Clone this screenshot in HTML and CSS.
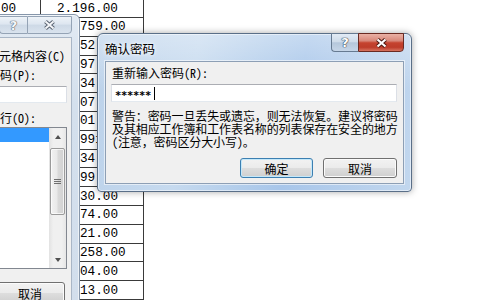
FILE: index.html
```html
<!DOCTYPE html>
<html lang="zh-CN">
<head>
<meta charset="utf-8">
<title>确认密码</title>
<link rel="stylesheet" href="styles.css">
</head>
<body>
<div class="sheet">
  <div class="row first"><div class="cell ca">00</div><div class="cell cb">2.196.00</div></div>
  <div class="row"><div class="cell ca"></div><div class="cell cb">759.00</div></div>
  <div class="row"><div class="cell ca"></div><div class="cell cb">52.00</div></div>
  <div class="row"><div class="cell ca"></div><div class="cell cb">97.00</div></div>
  <div class="row"><div class="cell ca"></div><div class="cell cb">34.00</div></div>
  <div class="row"><div class="cell ca"></div><div class="cell cb">07.00</div></div>
  <div class="row"><div class="cell ca"></div><div class="cell cb">01.00</div></div>
  <div class="row"><div class="cell ca"></div><div class="cell cb">991.00</div></div>
  <div class="row"><div class="cell ca"></div><div class="cell cb">34.00</div></div>
  <div class="row"><div class="cell ca"></div><div class="cell cb">99.00</div></div>
  <div class="row"><div class="cell ca"></div><div class="cell cb">30.00</div></div>
  <div class="row"><div class="cell ca"></div><div class="cell cb">74.00</div></div>
  <div class="row"><div class="cell ca"></div><div class="cell cb">21.00</div></div>
  <div class="row"><div class="cell ca"></div><div class="cell cb">258.00</div></div>
  <div class="row"><div class="cell ca"></div><div class="cell cb">04.00</div></div>
  <div class="row"><div class="cell ca"></div><div class="cell cb">13.00</div></div>
</div>

<div class="win back">
  <div class="titlebar">
    <div class="caps">
      <div class="cap help"><span class="q">?</span></div>
      <div class="cap close">
        <svg width="15" height="12" viewBox="0 0 15 12"><path d="M3.5 2.5 L11.5 9.5 M11.5 2.5 L3.5 9.5" stroke="#5a6472" stroke-width="4"/><path d="M3.5 2.5 L11.5 9.5 M11.5 2.5 L3.5 9.5" stroke="#f4f6f9" stroke-width="2"/></svg>
      </div>
    </div>
  </div>
  <div class="client back-client">
    <div class="chk"><span class="box"></span><span>保护工作表及锁定的单元格内容(C)</span></div>
    <div class="lbl gap6">取消工作表保护时使用的密码(P):</div>
    <div class="field back-field"></div>
    <div class="lbl gap8">允许此工作表的所有用户进行(O):</div>
    <div class="list">
      <div class="items">
        <div class="item sel">选定锁定单元格</div>
        <div class="item">选定未锁定的单元格</div>
        <div class="item">设置单元格格式</div>
        <div class="item">设置列格式</div>
        <div class="item">设置行格式</div>
        <div class="item">插入列</div>
        <div class="item">插入行</div>
        <div class="item">插入超链接</div>
        <div class="item">删除列</div>
      </div>
      <div class="sb">
        <div class="sbtn"><span class="arr up"></span></div>
        <div class="thumb"><span class="grip"></span></div>
        <div class="sbtn end"><span class="arr down"></span></div>
      </div>
    </div>
    <div class="btn back-btn">取消</div>
  </div>
</div>

<div class="win main">
  <div class="titlebar">
    <div class="title">确认密码</div>
    <div class="caps">
      <div class="cap help"><span class="q">?</span></div>
      <div class="cap close">
        <svg width="15" height="12" viewBox="0 0 15 12"><path d="M3.5 2.5 L11.5 9.5 M11.5 2.5 L3.5 9.5" stroke="#4b1810" stroke-width="4.2"/><path d="M3.5 2.5 L11.5 9.5 M11.5 2.5 L3.5 9.5" stroke="#ffffff" stroke-width="2.2"/></svg>
      </div>
    </div>
  </div>
  <div class="client main-client">
    <div class="lbl ml1">重新输入密码(R):</div>
    <div class="field main-field"><span class="stars">******</span><span class="caret"></span></div>
    <div class="warn">警告：密码一旦丢失或遗忘，则无法恢复。建议将密码<br>及其相应工作簿和工作表名称的列表保存在安全的地方<br>(注意，密码区分大小写)。</div>
    <div class="btns">
      <div class="btn ok">确定</div>
      <div class="btn cancel">取消</div>
    </div>
  </div>
</div>
</body>
</html>
```

FILE: styles.css
```css
* { box-sizing: border-box; margin: 0; padding: 0; }
html, body { width: 480px; height: 300px; overflow: hidden; background: #fff; }
body {
  position: relative;
  font-family: "Noto Sans Mono CJK SC", "Noto Sans CJK SC", sans-serif;
  font-size: 12px;
  color: #000;
}

/* spreadsheet column */
.sheet { width: 144px; font-family: "Liberation Mono", monospace; font-size: 12.7px; color: #000; }
.row { display: flex; height: 18.8px; border-bottom: 1px solid #3a3a3a; }
.row.first { height: 18px; }
.cell { display: flex; align-items: center; white-space: nowrap; overflow: hidden; }
.ca { width: 41px; border-right: 1px solid #3a3a3a; padding-left: 1px; }
.cb { width: 103px; border-right: 1px solid #3a3a3a; padding-left: 39px; }
.first .cb { padding-left: 16px; }

/* windows */
.win {
  position: absolute;
  display: flex;
  flex-direction: column;
  padding: 0 7px 7px;
  border-radius: 6px 6px 4px 4px;
}
.titlebar { display: flex; align-items: flex-start; flex: none; }
.caps { margin-left: auto; display: flex; margin-top: -1px; }
.cap { display: flex; align-items: center; justify-content: center; }
.q { font-family: "DejaVu Sans", sans-serif; font-weight: bold; font-size: 13px; line-height: 1; }
.client { flex: 1; background: #f0f0f0; display: flex; flex-direction: column; }

/* back (inactive) dialog */
.back {
  left: -159px; top: 14px; width: 239px; height: 300px;
  border: 1px solid #8696aa;
  background: linear-gradient(#e2eaf3, #d4e0ed 30%, #d2deec);
  box-shadow: inset 0 0 0 1px rgba(255,255,255,0.55);
}
.back .titlebar { height: 22px; }
.back .caps { margin-top: 1px; }
.back .cap { height: 18px; border: 1px solid #94a3b5; background: linear-gradient(#eef3f8, #dde6f0 45%, #cdd9e6 50%, #d9e3ee); }
.back .help { width: 28px; border-right: none; border-radius: 0 0 0 4px; }
.back .close { width: 45px; border-radius: 0 0 4px 0; }
.back .q { color: #f4f6f9; text-shadow: 0 0 1px #5a6472, 0 0 1px #5a6472, 0 0 1px #5a6472; }
.back-client { border: 1px solid #a9b6c6; padding: 10px 4px 0 6px; }

.chk { display: flex; align-items: center; height: 14px; white-space: nowrap; }
.box { width: 13px; height: 13px; border: 1px solid #8f8f8f; background: #fff; margin-right: 10px; flex: none; }
.lbl { height: 14px; line-height: 14px; white-space: nowrap; }
.gap6 { margin-top: 6px; }
.gap8 { margin-top: 8px; }
.field {
  background: #fff;
  border: 1px solid #abadb3;
  border-left-color: #dbdfe6; border-right-color: #dbdfe6; border-bottom-color: #e3e9ef;
}
.back-field { height: 17px; margin-top: 4px; }

.list { margin-top: 2px; height: 142px; display: flex; border: 1px solid #828790; background: #fff; }
.items { flex: 1; overflow: hidden; }
.item { height: 14px; line-height: 14px; white-space: nowrap; padding-left: 2px; }
.item.sel { background: #3399ff; color: #fff; }
.sb {
  width: 17px; display: flex; flex-direction: column;
  background: linear-gradient(to right, #e2e2e2, #f0f0f0 25%, #f0f0f0 75%, #e6e6e6);
}
.sbtn { height: 17px; display: flex; align-items: center; justify-content: center; }
.sbtn.end { margin-top: auto; }
.arr { width: 0; height: 0; border-left: 3.5px solid transparent; border-right: 3.5px solid transparent; }
.arr.up { border-bottom: 4px solid #505050; }
.arr.down { border-top: 4px solid #505050; }
.thumb {
  margin: 3px 1px 0; height: 67px;
  border: 1px solid #9a9a9a; border-radius: 2px;
  background: linear-gradient(to right, #f2f2f2, #e9e9e9 45%, #d9d9d9 55%, #d2d2d2);
  box-shadow: inset 0 0 0 1px rgba(255,255,255,0.7);
  display: flex; align-items: center; justify-content: center;
}
.grip { width: 7px; height: 5px; border-top: 1px solid #6f6f6f; border-bottom: 1px solid #6f6f6f; position: relative; }
.grip::after { content: ""; position: absolute; left: 0; right: 0; top: 1px; border-top: 1px solid #6f6f6f; }

.btn {
  display: flex; align-items: center; justify-content: center;
  border: 1px solid #707070; border-radius: 3px;
  background: linear-gradient(#f2f2f2 0%, #ebebeb 48%, #dddddd 52%, #cfcfcf 100%);
  box-shadow: inset 0 0 0 1px #fbfbfb;
  white-space: nowrap;
}
.back-btn { margin-top: 13px; height: 22px; width: 70px; align-self: flex-end; margin-right: 2px; }

/* main (active) dialog */
.main {
  left: 97px; top: 33px; width: 315px; height: 159px;
  border: 1px solid #5a6f88;
  background:
    linear-gradient(to bottom, rgba(255,255,255,0.35), rgba(255,255,255,0) 35%),
    linear-gradient(100deg, #bcd2ea 0%, #c6daef 30%, #b2cdeb 50%, #a8c6ea 62%, #c2d7ee 100%);
  box-shadow: inset 0 0 0 1px rgba(255,255,255,0.5), 0 0 7px rgba(0,0,0,0.35);
}
.main .titlebar { height: 27px; }
.title {
  padding-top: 3px; line-height: 24px; font-size: 12.5px; color: #000;
  text-shadow: 0 0 6px #fff, 0 0 3px #fff;
}
.main .cap { height: 19px; border: 1px solid #667a91; }
.main .help {
  width: 27px; border-right: none; border-radius: 0 0 0 4px;
  background: linear-gradient(#e2ebf5, #cfdcea 45%, #b5c7db 52%, #c6d6e8);
}
.main .help .q { color: #fff; text-shadow: 0 0 1px #2c3b4c, 0 0 1px #2c3b4c, 0 0 1px #2c3b4c; }
.main .close {
  width: 46px; border-color: #6a2a22; border-radius: 0 0 4px 0;
  background: linear-gradient(#eab1a5 0%, #d8887a 40%, #c5432f 52%, #bd3c2a 78%, #d6735f 100%);
}
.main-client {
  border: 1px solid #8d9fb5;
  box-shadow: 0 0 0 1px rgba(255,255,255,0.55);
  padding: 4px 6px 0 5px;
}
.ml1 { margin-left: 1px; }
.main-field {
  height: 18px; margin-top: 4px; padding-left: 3px;
  display: flex; align-items: center;
}
.stars { font-family: "DejaVu Sans Mono", monospace; font-weight: bold; font-size: 10.5px; line-height: 10px; padding-top: 4px; letter-spacing: -0.3px; }
.caret { display: inline-block; width: 1px; height: 13px; background: #000; margin-left: 3px; }
.warn { margin-top: 7px; margin-left: 1px; line-height: 13px; letter-spacing: -0.1px; white-space: nowrap; }
.btns { margin-top: 10px; display: flex; justify-content: flex-end; gap: 10px; }
.btns .btn { height: 20px; }
.ok { width: 73px; border-color: #3c7fb1; box-shadow: inset 0 0 0 1px #c4e8fa; }
.cancel { width: 74px; }
```
